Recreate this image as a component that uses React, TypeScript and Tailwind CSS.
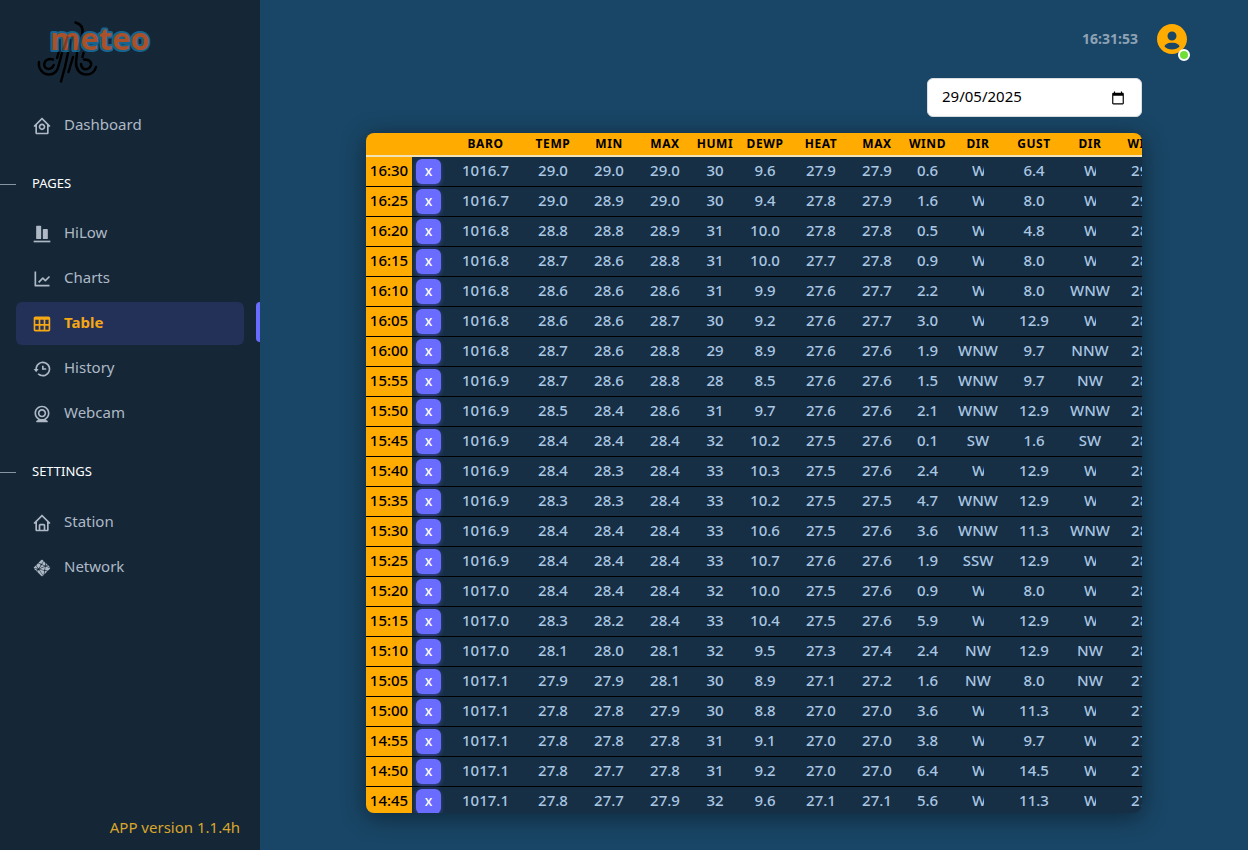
import React from "react";
import {
  BiHistory,
  BiHome,
  BiHomeCircle,
  BiLineChart,
  BiLogoNetlify,
  BiSolidObjectsVerticalBottom,
  BiSolidUserCircle,
  BiTable,
  BiWebcam,
} from "react-icons/bi";
import type { IconType } from "react-icons";

type Item = { label: string; icon: IconType; active?: boolean };

const home: Item[] = [{ label: "Dashboard", icon: BiHomeCircle }];

const pages: Item[] = [
  { label: "HiLow", icon: BiSolidObjectsVerticalBottom },
  { label: "Charts", icon: BiLineChart },
  { label: "Table", icon: BiTable, active: true },
  { label: "History", icon: BiHistory },
  { label: "Webcam", icon: BiWebcam },
];

const settings: Item[] = [
  { label: "Station", icon: BiHome },
  { label: "Network", icon: BiLogoNetlify },
];

const columns = [
  { label: "BARO", width: "w-[79px]" },
  { label: "TEMP", width: "w-14" },
  { label: "MIN", width: "w-14" },
  { label: "MAX", width: "w-14" },
  { label: "HUMI", width: "w-11" },
  { label: "DEWP", width: "w-14" },
  { label: "HEAT", width: "w-14" },
  { label: "MAX", width: "w-14" },
  { label: "WIND", width: "w-[45px]" },
  { label: "DIR", width: "w-14" },
  { label: "GUST", width: "w-14" },
  { label: "DIR", width: "w-14" },
  { label: "WIND", width: "w-14" },
];

const readings = [
  "16:30 1016.7 29.0 29.0 29.0 30 9.6 27.9 27.9 0.6 W 6.4 W 29.0",
  "16:25 1016.7 29.0 28.9 29.0 30 9.4 27.8 27.9 1.6 W 8.0 W 29.0",
  "16:20 1016.8 28.8 28.8 28.9 31 10.0 27.8 27.8 0.5 W 4.8 W 28.8",
  "16:15 1016.8 28.7 28.6 28.8 31 10.0 27.7 27.8 0.9 W 8.0 W 28.7",
  "16:10 1016.8 28.6 28.6 28.6 31 9.9 27.6 27.7 2.2 W 8.0 WNW 28.6",
  "16:05 1016.8 28.6 28.6 28.7 30 9.2 27.6 27.7 3.0 W 12.9 W 28.6",
  "16:00 1016.8 28.7 28.6 28.8 29 8.9 27.6 27.6 1.9 WNW 9.7 NNW 28.7",
  "15:55 1016.9 28.7 28.6 28.8 28 8.5 27.6 27.6 1.5 WNW 9.7 NW 28.7",
  "15:50 1016.9 28.5 28.4 28.6 31 9.7 27.6 27.6 2.1 WNW 12.9 WNW 28.5",
  "15:45 1016.9 28.4 28.4 28.4 32 10.2 27.5 27.6 0.1 SW 1.6 SW 28.4",
  "15:40 1016.9 28.4 28.3 28.4 33 10.3 27.5 27.6 2.4 W 12.9 W 28.4",
  "15:35 1016.9 28.3 28.3 28.4 33 10.2 27.5 27.5 4.7 WNW 12.9 W 28.3",
  "15:30 1016.9 28.4 28.4 28.4 33 10.6 27.5 27.6 3.6 WNW 11.3 WNW 28.4",
  "15:25 1016.9 28.4 28.4 28.4 33 10.7 27.6 27.6 1.9 SSW 12.9 W 28.4",
  "15:20 1017.0 28.4 28.4 28.4 32 10.0 27.5 27.6 0.9 W 8.0 W 28.4",
  "15:15 1017.0 28.3 28.2 28.4 33 10.4 27.5 27.6 5.9 W 12.9 W 28.3",
  "15:10 1017.0 28.1 28.0 28.1 32 9.5 27.3 27.4 2.4 NW 12.9 NW 28.1",
  "15:05 1017.1 27.9 27.9 28.1 30 8.9 27.1 27.2 1.6 NW 8.0 NW 27.9",
  "15:00 1017.1 27.8 27.8 27.9 30 8.8 27.0 27.0 3.6 W 11.3 W 27.8",
  "14:55 1017.1 27.8 27.8 27.8 31 9.1 27.0 27.0 3.8 W 9.7 W 27.8",
  "14:50 1017.1 27.8 27.7 27.8 31 9.2 27.0 27.0 6.4 W 14.5 W 27.8",
  "14:45 1017.1 27.8 27.7 27.9 32 9.6 27.1 27.1 5.6 W 11.3 W 27.8",
].map((line) => line.split(" "));

function Logo() {
  return (
    <svg viewBox="0 0 130 74" className="h-[74px] w-[130px]" role="img" aria-label="meteo">
      <g fill="none" stroke="#000" strokeWidth="2.5" strokeLinecap="round">
        <path d="M45.5 8.5C51 10 53.500 14 52.5 20L48 37" />
        <path d="M9 48C8 55 13 60.500 19 60.500C24 60.500 27.500 57 28.500 52L32 39" />
        <path d="M23 45.500C19 44 14.500 46 14.200 50.500C14.500 55.500 21 57 23.800 51" />
        <path d="M28.500 39L27 44" />
        <path d="M38 39L35 53L31 67.500" />
        <path d="M43 43L38.500 58" />
        <path d="M47 39L46 48C45.500 55 50 60.500 56 60.500C61.500 60.500 65 57 66 53" />
        <path d="M51 50C51.500 54 54 55.500 56.500 55.200C60.500 54.500 62.500 50 60 47.500C58.500 45.800 56 45.500 54 45.500" />
        <path d="M53.500 39L52.500 43" />
      </g>
      <text
        x="20"
        y="36"
        fill="#aa512a"
        stroke="#17658e"
        strokeWidth="4"
        paintOrder="stroke"
        strokeLinejoin="round"
        className="font-['Open_Sans',sans-serif] text-[31px] font-bold"
      >
        meteo
      </text>
      <g fill="none" stroke="#000" strokeOpacity="0.25" strokeWidth="2.5">
        <path d="M52.500 18L48 37M43 22L38 37M38 22L33 37" />
      </g>
    </svg>
  );
}

function NavList({ items }: { items: Item[] }) {
  return (
    <ul className="flex flex-col gap-0.5">
      {items.map(({ label, icon: Icon, active }) => (
        <li key={label} className="relative px-4">
          <a
            href="#"
            aria-current={active ? "page" : undefined}
            className={
              active
                ? "flex h-[43px] items-center gap-3 rounded-md bg-[#233058] px-4 font-bold text-[#f5a714]"
                : "flex h-[43px] items-center gap-3 rounded-md px-4 text-[#afb9c6]"
            }
          >
            <Icon className="size-5 shrink-0" />
            <span className="pb-0.5">{label}</span>
          </a>
          {active && <span className="absolute top-0 right-0 h-10 w-1 rounded-l-md bg-[#696cff]" />}
        </li>
      ))}
    </ul>
  );
}

function SectionTitle({ children }: { children: React.ReactNode }) {
  return (
    <h2 className="flex h-5 items-center gap-4 text-[13px] text-white">
      <span className="h-px w-4 bg-[#8795a3]" />
      {children}
    </h2>
  );
}

function DateField() {
  return (
    <div className="flex h-[39px] w-[215px] items-center self-end rounded-md border border-[#d9dee3] bg-white px-3.5">
      <input
        type="text"
        aria-label="Date"
        defaultValue="29/05/2025"
        className="min-w-0 flex-1 bg-transparent pb-0.5 text-[15px] text-black outline-none"
      />
      <button type="button" aria-label="Choose a date" className="px-0.5">
        <svg viewBox="0 0 24 24" className="size-3.5" fill="#000" aria-hidden="true">
          <path d="M20 3h-1V1h-2v2H7V1H5v2H4c-1.100 0-2 .9-2 2v16c0 1.100.9 2 2 2h16c1.100 0 2-.9 2-2V5c0-1.100-.9-2-2-2zm0 18H4V8h16v13z" />
        </svg>
      </button>
    </div>
  );
}

function Cell({ value }: { value: string }) {
  return value === "W" ? (
    <span className="inline-block w-3 overflow-hidden align-top">W</span>
  ) : (
    <>{value}</>
  );
}

export default function App() {
  return (
    <div className="flex min-h-screen bg-[#194666] font-['Noto_Sans',sans-serif] text-[15px]">
      <aside className="flex w-[260px] shrink-0 flex-col bg-[#152737]">
        <a href="#" className="block pt-3.5 pl-[30px]">
          <Logo />
        </a>
        <nav className="flex flex-1 flex-col pt-4">
          <NavList items={home} />
          <div className="pt-[27px] pb-[18px]">
            <SectionTitle>PAGES</SectionTitle>
          </div>
          <NavList items={pages} />
          <div className="pt-[27px] pb-[19px]">
            <SectionTitle>SETTINGS</SectionTitle>
          </div>
          <NavList items={settings} />
        </nav>
        <p className="px-5 pb-[13px] text-right leading-5 text-[#d9a62b]">APP version 1.1.4h</p>
      </aside>

      <main className="min-w-0 flex-1">
        <header className="flex h-[78px] items-center justify-end gap-4 pr-[58px]">
          <time className="text-sm font-bold text-[#8ea3b5]">16:31:53</time>
          <button type="button" aria-label="Account" className="relative">
            <BiSolidUserCircle className="size-9 text-[#ffab00]" />
            <span className="absolute right-0 -bottom-1 size-3 rounded-full border-2 border-white bg-[#71dd37]" />
          </button>
        </header>

        <div className="mx-auto flex w-full max-w-[776px] flex-col gap-4">
          <DateField />

          <div className="h-[80vh] overflow-auto rounded-lg bg-[#172f45] shadow-[0_4px_24px_rgba(0,0,0,0.45)] [scrollbar-width:none]">
            <table className="w-[784px] table-fixed border-separate border-spacing-0 text-center font-medium text-[#a9c6e2]">
              <thead>
                <tr className="text-xs tracking-wider text-black">
                  <th className="sticky top-0 z-10 h-6 w-[46px] border-b-2 border-[#f3e2b6] bg-[#ffab00] p-0" />
                  <th className="sticky top-0 z-10 h-6 w-[34px] border-b-2 border-[#f3e2b6] bg-[#ffab00] p-0" />
                  {columns.map((column, i) => (
                    <th
                      key={i}
                      className={`sticky top-0 z-10 h-6 border-b-2 border-[#f3e2b6] bg-[#ffab00] p-0 font-bold ${column.width}`}
                    >
                      {column.label}
                    </th>
                  ))}
                </tr>
              </thead>
              <tbody>
                {readings.map(([time, ...values]) => (
                  <tr key={time}>
                    <th className="h-[30px] border-b border-black bg-[#ffab00] p-0 pb-0.5 font-medium text-black">
                      {time}
                    </th>
                    <td className="border-b border-black p-0">
                      <button
                        type="button"
                        aria-label={`Remove ${time}`}
                        className="ml-1 block h-[25px] w-[25px] rounded-md bg-[#696cff] pb-0.5 text-sm leading-5 font-medium text-white shadow-[0_2px_4px_rgba(105,108,255,0.4)]"
                      >
                        x
                      </button>
                    </td>
                    {values.map((value, i) => (
                      <td key={i} className="border-b border-black p-0 pb-0.5">
                        <Cell value={value} />
                      </td>
                    ))}
                  </tr>
                ))}
              </tbody>
            </table>
          </div>
        </div>
      </main>
    </div>
  );
}
